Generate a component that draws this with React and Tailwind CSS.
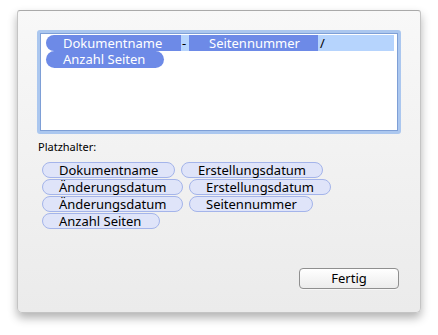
import React from 'react';

const font = { fontFamily: '"Noto Sans", "DejaVu Sans", sans-serif' };

const placeholders = [
  [
    { label: 'Dokumentname', w: 'w-[133px]' },
    { label: 'Erstellungsdatum', w: 'w-[142px]' },
  ],
  [
    { label: 'Änderungsdatum', w: 'w-[141px]' },
    { label: 'Erstellungsdatum', w: 'w-[142px]' },
  ],
  [
    { label: 'Änderungsdatum', w: 'w-[141px]' },
    { label: 'Seitennummer', w: 'w-[124px]' },
  ],
  [{ label: 'Anzahl Seiten', w: 'w-[118px]' }],
];

const Chip = ({ label, w }) => (
  <div
    className={`${w} h-[16px] rounded-full border border-[#a4b4ea] bg-[#dfe4f9] pl-[16px] text-[13px] leading-[14px] text-black`}
  >
    {label}
  </div>
);

const App = () => {
  return (
    <div className="w-[438px] h-[335px] bg-white pt-[10px] pl-[17px] font-['Noto_Sans',sans-serif]" style={font}>
      <div className="w-[404px] h-[303px] rounded-t-[3px] rounded-b-[5px] border border-[#c4c4c4] border-t-[#a9a9a9] bg-gradient-to-b from-[#f8f8f8] to-[#ebebeb] shadow-[0_5px_10px_rgba(0,0,0,0.3)] pt-[19px] pl-[19px]">
        {/* format field */}
        <div className="w-[364px] h-[104px] rounded-[3px] border-[3px] border-[#abc7ef]">
          <div className="h-full border border-[#7e9fd6] bg-white pt-[1px] pl-[5px] text-[13px] leading-[16px]">
            <div className="flex h-[16px]">
              <div className="w-[135px] rounded-l-full bg-[#6d8ae7] pl-[17px] text-white">Dokumentname</div>
              <div className="w-[8px] bg-[#b6d4fd] pl-[1px] text-black">-</div>
              <div className="w-[129px] bg-[#6d8ae7] pl-[20px] text-white">Seitennummer</div>
              <div className="w-[76px] bg-[#b6d4fd] pl-[2px] text-black">/</div>
            </div>
            <div className="flex h-[17px]">
              <div className="w-[118px] rounded-full bg-[#6d8ae7] pl-[17px] text-white">Anzahl Seiten</div>
            </div>
          </div>
        </div>

        <div className="mt-[6px] pl-[1px] text-[11px] leading-[14px] text-black">Platzhalter:</div>

        <div className="mt-[8px] ml-[5px] flex flex-col gap-[1px]">
          {placeholders.map((row, i) => (
            <div key={i} className="flex gap-[6px]">
              {row.map((p, j) => (
                <Chip key={j} label={p.label} w={p.w} />
              ))}
            </div>
          ))}
        </div>

        <div className="mt-[39px] ml-[262px] w-[100px] h-[21px] rounded-[4px] border border-[#8f8f8f] bg-gradient-to-b from-white to-[#ececec] text-center text-[13px] leading-[19px] text-black shadow-[0_1px_0_rgba(255,255,255,0.6)]">
          Fertig
        </div>
      </div>
    </div>
  );
};

export default App;
